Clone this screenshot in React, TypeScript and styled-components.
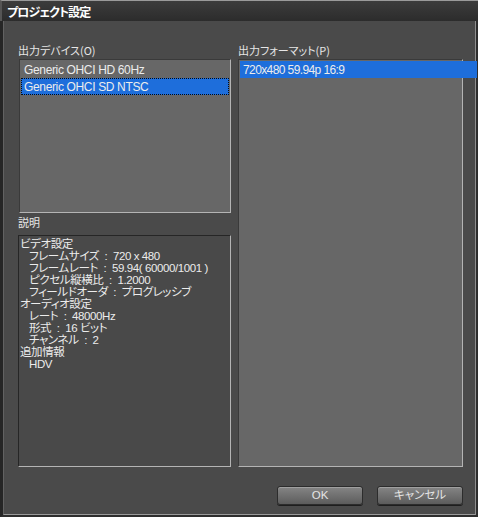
import React from "react";
import styled, { createGlobalStyle } from "styled-components";

const Global = createGlobalStyle`
  html, body { margin: 0; padding: 0; background: #4a4a4a; }
  body { font-family: "Liberation Sans", "Noto Sans CJK JP", sans-serif; }
  * { box-sizing: border-box; }
`;

const Window = styled.div`
  width: 478px;
  height: 517px;
  display: flex;
  flex-direction: column;
  background: #4a4a4a;
  overflow: hidden;
`;

const TitleBar = styled.div`
  height: 21px;
  flex: none;
  display: flex;
  align-items: center;
  padding-left: 5px;
  background: linear-gradient(#3c3c3c, #2c2c2c);
  border-top: 1px solid #9a9a9a;
  border-left: 2px solid #555;
  color: #ffffff;
  font-family: "Noto Sans CJK JP", sans-serif;
  font-weight: 700;
  font-size: 12px;
  letter-spacing: -0.9px;
  font-feature-settings: "palt";
`;

const Frame = styled.div`
  flex: 1;
  display: flex;
  flex-direction: column;
  border-left: 3px solid #262626;
  border-right: 2px solid #2e2e2e;
  border-bottom: 2px solid #2e2e2e;
`;

const Inner = styled.div`
  flex: 1;
  display: flex;
  flex-direction: column;
  border-left: 1px solid #626262;
  border-right: 1px solid #8e8e8e;
  border-bottom: 1px solid #9a9a9a;
  padding: 23px 0 0 14px;
`;

const Columns = styled.div`
  display: grid;
  grid-template-columns: 213px 225px;
  column-gap: 7px;
`;

const Column = styled.div`
  display: flex;
  flex-direction: column;
`;

const Label = styled.div<{ $h: number; $pad?: number }>`
  height: ${(p) => p.$h}px;
  padding-top: ${(p) => p.$pad ?? 0}px;
  color: #e6e6e6;
  font-family: "Noto Sans CJK JP", sans-serif;
  font-size: 11px;
  line-height: 13px;
  font-feature-settings: "palt";
  white-space: nowrap;
`;

const ListBox = styled.div<{ $h: number; $ml?: number }>`
  height: ${(p) => p.$h}px;
  margin-left: ${(p) => p.$ml ?? 0}px;
  background: #676767;
  border-top: 1px solid #3a3a3a;
  border-left: 1px solid #3a3a3a;
  border-right: 1px solid #b4b4b4;
  border-bottom: 1px solid #b4b4b4;
  padding: 1px 1px;
  position: relative;
`;

const Item = styled.div<{ $sel?: boolean; $focus?: boolean; $extend?: number; $tight?: number }>`
  height: 17px;
  display: flex;
  align-items: center;
  padding-left: 2px;
  margin-right: ${(p) => -(p.$extend ?? 0)}px;
  color: #ececec;
  font-size: 12px;
  letter-spacing: ${(p) => -(p.$tight ?? 0.35)}px;
  font-family: "Liberation Sans", sans-serif;
  white-space: nowrap;
  background: ${(p) => (p.$sel ? "#1e6edb" : "transparent")};
  border: 1px ${(p) => (p.$focus ? "dotted #0a0a0a" : "solid transparent")};
`;

const DescBox = styled.div`
  height: 232px;
  background: #494949;
  border-top: 1px solid #262626;
  border-left: 1px solid #262626;
  border-right: 1px solid #b4b4b4;
  border-bottom: 1px solid #b4b4b4;
  padding: 2px 0 0 1px;
`;

const DescLine = styled.div<{ $indent?: boolean }>`
  height: 12px;
  line-height: 12px;
  padding-left: ${(p) => (p.$indent ? 9 : 0)}px;
  color: #ececec;
  font-size: 11.5px;
  letter-spacing: -0.4px;
  font-family: "Liberation Sans", "Noto Sans CJK JP", sans-serif;
  font-feature-settings: "palt";
  white-space: pre;
`;

const ButtonRow = styled.div`
  display: flex;
  justify-content: flex-end;
  gap: 14px;
  margin-top: 19px;
  padding-right: 12px;
`;

const Button = styled.button`
  width: 86px;
  height: 19px;
  padding: 0;
  border-radius: 3px;
  border: 1px solid #2c2c2c;
  background: linear-gradient(#858585, #5c5c5c);
  box-shadow: inset 0 1px 0 #a0a0a0, 0 1px 0 #1e1e1e;
  color: #e4e4e4;
  font-family: "Liberation Sans", "Noto Sans CJK JP", sans-serif;
  font-size: 11.5px;
  font-feature-settings: "palt";
  line-height: 17px;
`;

const desc: [string, boolean][] = [
  ["ビデオ設定", false],
  ["フレームサイズ  :  720 x 480", true],
  ["フレームレート  :  59.94( 60000/1001 )", true],
  ["ピクセル縦横比  :  1.2000", true],
  ["フィールドオーダ  :  プログレッシブ", true],
  ["オーディオ設定", false],
  ["レート  :  48000Hz", true],
  ["形式  :  16 ビット", true],
  ["チャンネル  :  2", true],
  ["追加情報", false],
  ["HDV", true],
];

export default function App() {
  return (
    <Window>
      <Global />
      <TitleBar>プロジェクト設定</TitleBar>
      <Frame>
        <Inner>
          <Columns>
            <Column>
              <Label $h={15}>出力デバイス(O)</Label>
              <ListBox $h={154} $ml={1}>
                <Item>Generic OHCI HD 60Hz</Item>
                <Item $sel $focus>Generic OHCI SD NTSC</Item>
              </ListBox>
              <Label $h={22} $pad={3}>説明</Label>
              <DescBox>
                {desc.map(([t, ind], i) => (
                  <DescLine key={i} $indent={ind}>{t}</DescLine>
                ))}
              </DescBox>
            </Column>
            <Column>
              <Label $h={15}>出力フォーマット(P)</Label>
              <ListBox $h={408}>
                <Item $sel $extend={16} $tight={0.6}>720x480 59.94p 16:9</Item>
              </ListBox>
            </Column>
          </Columns>
          <ButtonRow>
            <Button>OK</Button>
            <Button>キャンセル</Button>
          </ButtonRow>
        </Inner>
      </Frame>
    </Window>
  );
}
